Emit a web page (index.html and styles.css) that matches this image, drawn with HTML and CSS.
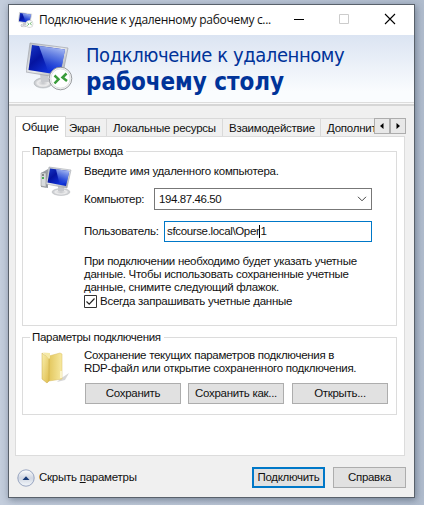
FILE: index.html
```html
<!DOCTYPE html>
<html lang="ru">
<head>
<meta charset="utf-8">
<title>Подключение к удаленному рабочему столу</title>
<link rel="stylesheet" href="styles.css">
</head>
<body>
<svg class="defs" width="0" height="0" aria-hidden="true">
  <defs>
    <linearGradient id="screen" x1="0" y1="0" x2="1" y2="1"><stop offset="0" stop-color="#1838c8"/><stop offset=".35" stop-color="#0514a0"/><stop offset=".75" stop-color="#1034dc"/><stop offset="1" stop-color="#0820b0"/></linearGradient>
    <linearGradient id="glare" x1=".6" y1="0" x2=".3" y2="1"><stop offset="0" stop-color="#a9bcf4"/><stop offset=".5" stop-color="#5878e4" stop-opacity=".8"/><stop offset="1" stop-color="#2448dc" stop-opacity=".1"/></linearGradient>
    <linearGradient id="frame" x1="0" y1="0" x2="1" y2="1"><stop offset="0" stop-color="#b8bcc2"/><stop offset=".5" stop-color="#e8eaec"/><stop offset="1" stop-color="#9a9da2"/></linearGradient>
    <radialGradient id="foot"><stop offset="0" stop-color="#c2c4c8"/><stop offset=".6" stop-color="#ededee"/><stop offset="1" stop-color="#b9bcc1"/></radialGradient>
    <linearGradient id="fold" x1="0" y1="0" x2="1" y2="1"><stop offset="0" stop-color="#f9efad"/><stop offset="1" stop-color="#dfbd4d"/></linearGradient>
    <linearGradient id="foldback" x1="0" y1="0" x2="1" y2="0"><stop offset="0" stop-color="#e3c75e"/><stop offset="1" stop-color="#f7e9a0"/></linearGradient>
    <linearGradient id="disc" x1="0" y1="0" x2="0" y2="1"><stop offset="0" stop-color="#fff"/><stop offset=".5" stop-color="#d0d6e2"/><stop offset="1" stop-color="#f4f8fc"/></linearGradient>
    <symbol id="remote" viewBox="0 0 48 49">
      <ellipse cx="17" cy="41" rx="9" ry="5" fill="url(#foot)" stroke="#b4b8bc" stroke-width=".6"/>
      <path d="M14 32h8l1 8h-8z" fill="#c9cbcf"/>
      <path d="M4 1 42 6 36 36 0 30z" fill="url(#frame)" stroke="#a0a4aa" stroke-width=".7"/>
      <path d="M6 3 39 7.500 34 33 2.500 28z" fill="url(#screen)"/>
      <path d="M13 4 39 7.500 36 24 22 29z" fill="url(#glare)"/>
      <circle cx="34.500" cy="36.500" r="11.300" fill="#f4f5f5" stroke="#8e9194" stroke-width=".9"/>
      <circle cx="34.500" cy="36.500" r="9.600" fill="#fff" stroke="#d9dcdc" stroke-width=".8"/>
      <path d="m28.500 33.500 4 3.700-4 4.300M40.500 31.500l-4 4 4.500 3.500" fill="none" stroke="#3a9c3a" stroke-width="2.500"/>
    </symbol>
  </defs>
</svg>
<main class="window">
  <header class="titlebar">
    <svg class="app-icon" viewBox="0 0 48 49"><use href="#remote"/></svg>
    <span class="title">Подключение к удаленному рабочему с...</span>
    <svg class="captions" width="112" height="30" viewBox="0 0 112 30" fill="none">
      <path d="M4 14.500h10" stroke="#000"/>
      <path d="M49.500 9.500h9v9h-9z" stroke="#ccc"/>
      <path d="m95 9 10 10m0-10L95 19" stroke="#000" stroke-width="1.100"/>
    </svg>
  </header>
  <section class="banner">
    <svg class="banner-icon" viewBox="0 0 48 49"><use href="#remote"/></svg>
    <h1><span class="line-one">Подключение к удаленному</span><strong>рабочему столу</strong></h1>
  </section>
  <div class="rule"></div>
  <nav class="tabs">
    <span class="tab active">Общие</span>
    <span class="tab screen">Экран</span>
    <span class="tab local">Локальные ресурсы</span>
    <span class="tab exp">Взаимодействие</span>
    <span class="tab more">Дополнит</span>
    <span class="scroller"><svg width="14" height="14"><path d="M8.500 4v6L5 7z"/></svg></span>
    <span class="scroller"><svg width="14" height="14"><path d="M5.500 4v6L9 7z"/></svg></span>
  </nav>
  <section class="pane">
    <fieldset class="group login">
      <legend>Параметры входа</legend>
      <svg class="group-icon" width="34" height="32" viewBox="0 0 34 32">
        <path d="M1 7 8 3v19l-7-1z" fill="#9a9fa4"/><path d="M1 7h5v14l-5-1z" fill="#d8dbdd" stroke="#888" stroke-width=".5"/><path d="M2 9h2" stroke="#333"/><path d="M2 11h2v2H2z" fill="#4cab54"/>
        <ellipse cx="21" cy="26" rx="9" ry="3.500" fill="url(#foot)" stroke="#c0c2c5" stroke-width=".5"/>
        <path d="M18 20h6v5h-6z" fill="#c6c8cc"/>
        <path d="M9 1 31 4 27 22 6 18z" fill="url(#frame)" stroke="#a6aab0" stroke-width=".6"/>
        <path d="M10 2.500 29.300 5 26 20 7.500 16.600z" fill="url(#screen)"/><path d="m16 3.300 13.300 1.700-2.500 12-7.300 1z" fill="url(#glare)"/>
      </svg>
      <div class="group-body">
        <p class="intro">Введите имя удаленного компьютера.</p>
        <div class="field computer"><label>Компьютер:</label><div class="box"><span>194.87.46.50</span><svg width="10" height="6" viewBox="0 0 10 6"><path d="m1 .8 4 4 4-4" fill="none" stroke="#444"/></svg></div></div>
        <div class="field user"><label>Пользователь:</label><div class="box"><span class="login-value">sfcourse.local\Oper</span><i class="caret"></i><span>1</span></div></div>
        <p class="note"><span>При подключении необходимо будет указать учетные</span><span>данные. Чтобы использовать сохраненные учетные</span><span>данные, снимите следующий флажок.</span></p>
        <div class="check"><svg width="13" height="13" viewBox="0 0 13 13" fill="none"><path d="M.5.500h12v12H.5z" fill="#fff" stroke="#333"/><path d="m2.500 6.500 2.700 2.700 5.300-5.700" stroke="#222" stroke-width="1.200"/></svg><span>Всегда запрашивать учетные данные</span></div>
      </div>
    </fieldset>
    <fieldset class="group connection">
      <legend>Параметры подключения</legend>
      <svg class="group-icon" width="32" height="34" viewBox="0 0 32 34">
        <path d="m20 28 9-6-4 7-8 2z" fill="#777" opacity=".3"/>
        <path d="M9 5 20 2l2 1v25l-13 2z" fill="url(#foldback)" stroke="#d9bd60" stroke-width=".5"/>
        <path d="m2 2 7 5v23l-2 2-5-4z" fill="url(#fold)" stroke="#c9a844" stroke-width=".5"/>
        <path d="m3 1.500 7 .5v5l-1 1z" fill="#f5e9a6"/>
        <path d="M21 20v7" stroke="#fff8d8" stroke-width="1.500"/>
      </svg>
      <div class="group-body">
        <p class="note"><span>Сохранение текущих параметров подключения в</span><span>RDP-файл или открытие сохраненного подключения.</span></p>
        <div class="actions"><button>Сохранить</button><button class="save-as">Сохранить как...</button><button class="open">Открыть...</button></div>
      </div>
    </fieldset>
  </section>
  <footer class="footer">
    <svg width="18" height="18" viewBox="0 0 18 18"><circle cx="9" cy="9" r="8.200" fill="url(#disc)" stroke="#8f9dbb" stroke-width=".9"/><path d="M5.500 11 9 7.300l3.500 3.700z" fill="#183a78"/></svg>
    <span class="toggle">Скрыть <u>п</u>араметры</span>
    <button class="primary">Подключить</button>
    <button class="help">Справка</button>
  </footer>
</main>
</body>
</html>
```
FILE: styles.css
```css
* { box-sizing: border-box; }
html { background: #fff; }
body {
  margin: 0;
  width: 424px;
  height: 505px;
  padding: 4px 9px 7px 8px;
  overflow: hidden;
  background: linear-gradient(90deg, #c3cddc, #bac5d5 60%, #b0bccd);
  font: 11.5px/13px "Liberation Sans", sans-serif;
  letter-spacing: -.25px;
  color: #111;
}
.defs { position: absolute; }
p, h1, fieldset { margin: 0; padding: 0; }
svg { flex: none; display: block; }
span, label, legend { white-space: nowrap; }
.window {
  height: 494px;
  display: flex;
  flex-direction: column;
  border: 1px solid #59616b;
  background: #f0f0f0;
  box-shadow: 1px 2px 7px rgba(35, 50, 70, .45);
}
.titlebar {
  height: 30px;
  display: flex;
  align-items: center;
  padding-left: 9px;
  background: #fff;
  font: 12px/16px "Open Sans", sans-serif;
}
.app-icon { width: 16px; height: 16px; }
.title { margin-left: 5px; width: 235px; letter-spacing: -.3px; }
.captions { margin-left: 16px; }
.banner {
  height: 67px;
  display: flex;
  padding: 7px 0 0 17px;
  background: linear-gradient(#dbe4f2, #fafcfe 85%);
  color: #003399;
}
.banner-icon { width: 48px; height: 49px; }
h1 {
  display: flex;
  flex-direction: column;
  margin-left: 12px;
  font: 20px/27px "DejaVu Sans Condensed", "DejaVu Sans", sans-serif;
  letter-spacing: 0;
}
.line-one { letter-spacing: -.43px; }
h1 strong { font-size: 24px; letter-spacing: -.05px; white-space: nowrap; }
.rule { height: 4px; border-top: 1px solid #ddd; border-bottom: 2px solid #d6d6d6; background: #f8f8f8; }
.tabs { height: 30px; display: flex; align-items: flex-end; padding: 0 8px 0 6px; }
.tab {
  height: 18px;
  padding: 3px 0 0 6px;
  border-top: 1px solid #d9d9d9;
  border-right: 1px solid #d9d9d9;
  overflow: hidden;
}
.tab.active {
  position: relative;
  height: 21px;
  width: 51px;
  margin-bottom: -1px;
  padding-top: 4px;
  border-left: 1px solid #d9d9d9;
  background: #fff;
}
.tab.screen { width: 41px; padding-left: 3px; }
.tab.local { width: 116px; }
.tab.exp { width: 98px; }
.tab.more { width: 53px; border-right: 0; }
.scroller { width: 16px; height: 16px; margin-bottom: 2px; border: 1px solid #adadad; background: #e8e8e8; }
.pane {
  height: 320px;
  margin: 0 9px 0 6px;
  padding: 7px 7px 0 6px;
  border: 1px solid #dcdcdc;
  background: #fff;
}
.group { position: relative; min-width: 0; display: flex; border: 1px solid #dcdcdc; padding-left: 61px; }
.group legend { margin-left: -54px; padding: 0 3px 0 2px; height: 15px; line-height: 15px; letter-spacing: -.31px; }
.login { height: 182px; }
.connection { height: 85px; margin-top: 4px; }
.group-icon { position: absolute; left: 17px; top: 7px; }
.connection .group-icon { top: 6px; }
.group-body { width: 310px; }
.intro { margin-top: 6px; }
.field { display: flex; align-items: center; height: 22px; }
.computer { margin-top: 10px; }
.user { margin-top: 10px; }
.field label { width: 70px; }
.user label { width: 80px; }
.box { display: flex; align-items: center; width: 218px; height: 22px; border: 1px solid #777; padding: 0 4px; background: #fff; }
.box svg { margin-left: auto; }
.computer .box span { letter-spacing: -.4px; }
.user .box { width: 208px; height: 21px; border-color: #0078c8; padding-left: 2px; }
.login-value { letter-spacing: -.35px; }
.caret { width: 1px; height: 13px; background: #000; }
.note { display: flex; flex-direction: column; letter-spacing: -.28px; }
.login .note { margin-top: 13px; }
.check { display: flex; align-items: center; gap: 3px; height: 13px; margin-top: 1px; }
.connection .note { margin-top: 4px; }
.actions { display: flex; gap: 7px; margin: 8px 0 0 1px; }
button {
  width: 96px;
  height: 21px;
  padding: 0;
  border: 1px solid #adadad;
  border-radius: 0;
  background: #e1e1e1;
  color: #111;
  font: inherit;
  letter-spacing: -.3px;
  white-space: nowrap;
}
.open { margin-left: 1px; }
.footer { display: flex; align-items: center; height: 41px; padding: 2px 8px 0; }
.toggle { margin-left: 4px; width: 98px; }
.primary { width: 73px; margin-left: auto; border: 2px solid #0078c8; }
.help { width: 73px; margin-left: 8px; }
```
